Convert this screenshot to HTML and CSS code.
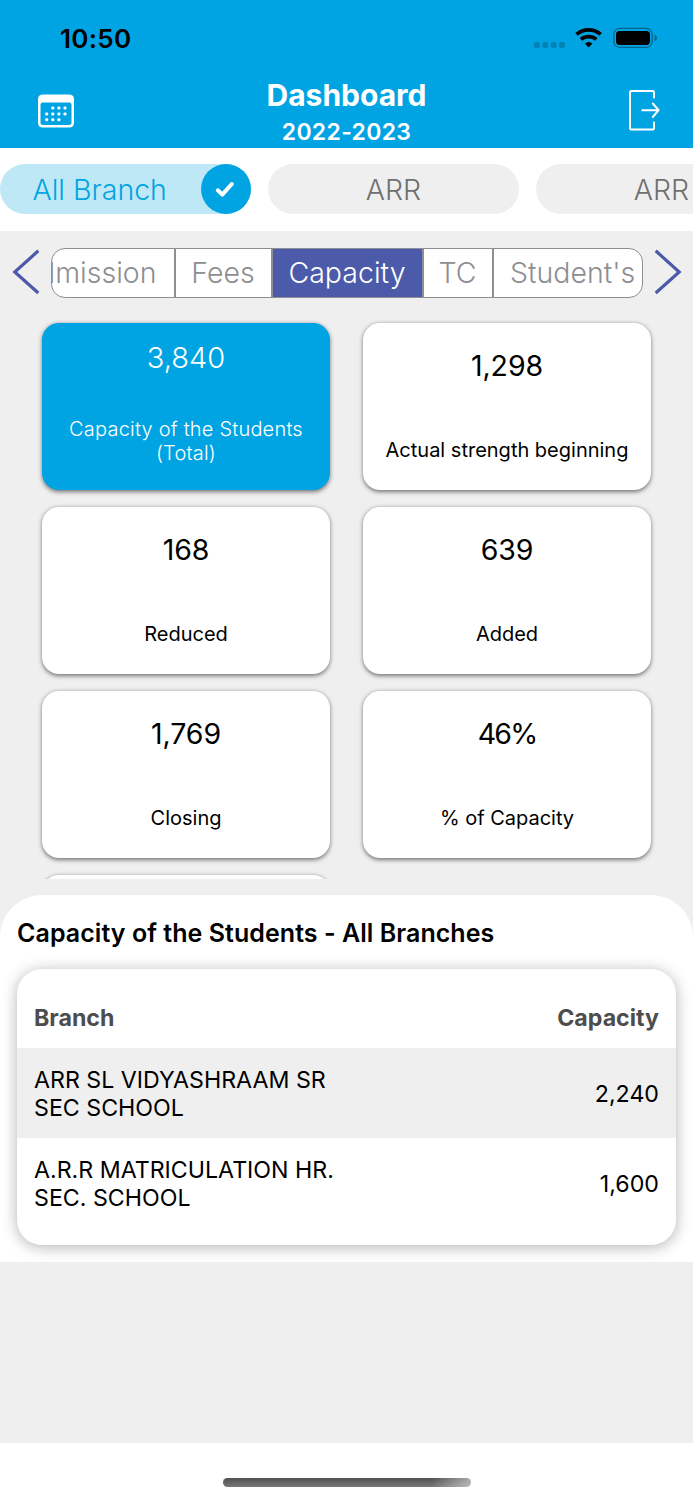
FILE: index.html
```html
<!DOCTYPE html>
<html lang="en">
<head>
  <meta charset="UTF-8" />
  <meta name="viewport" content="width=device-width, initial-scale=1.0"/>
  <title>Dashboard</title>
  <link rel="stylesheet" href="styles.css">
</head>
<body>
  <div class="app">
    <header class="header">
      <div class="status-bar">
        <span class="time">10:50</span>
        <svg class="status-icons" width="124" height="24" viewBox="0 0 124 24">
          <g fill="#0382b6">
            <rect x="1" y="16" width="6" height="6" rx="2"/>
            <rect x="9.3" y="16" width="6" height="6" rx="2"/>
            <rect x="17.7" y="16" width="6" height="6" rx="2"/>
            <rect x="26" y="16" width="6" height="6" rx="2"/>
          </g>
          <path d="M43.6 8.4 A18.3 18.3 0 0 1 67.6 8.4" fill="none" stroke="#000" stroke-width="3.9"/>
          <path d="M47.9 13.4 A12 12 0 0 1 63.3 13.4" fill="none" stroke="#000" stroke-width="3.8"/>
          <path d="M51.8 17.6 Q55.6 14.4 59.4 17.6 L55.6 21.6 Z" fill="#000"/>
          <rect x="80.8" y="2.4" width="38.4" height="19" rx="6" fill="none" stroke="#04658e" stroke-width="1.3"/>
          <rect x="83" y="4.9" width="34" height="14" rx="3.6" fill="#000"/>
          <path d="M121.5 8.6 Q124 10 124 11.9 Q124 14 121.5 15.2 Z" fill="#04658e"/>
        </svg>
      </div>
      <div class="nav-bar">
        <svg class="calendar-icon" width="36" height="34" viewBox="0 0 36 34">
          <path fill="#fff" fill-rule="evenodd" d="M5 0.5 H31 Q36 0.5 36 5.5 V28.5 Q36 33.5 31 33.5 H5 Q0 33.5 0 28.5 V5.5 Q0 0.5 5 0.5 Z M4.7 8.5 Q2.5 8.5 2.5 10.7 V28.5 Q2.5 31 5 31 H31 Q33.5 31 33.5 28.5 V10.7 Q33.5 8.5 31.3 8.5 Z"/>
          <g fill="#fff">
            <rect x="13.3" y="12.5" width="3" height="3" rx="1"/><rect x="19.4" y="12.5" width="3" height="3" rx="1"/><rect x="25.5" y="12.5" width="3" height="3" rx="1"/>
            <rect x="7.2" y="18.4" width="3" height="3" rx="1"/><rect x="13.3" y="18.4" width="3" height="3" rx="1"/><rect x="19.4" y="18.4" width="3" height="3" rx="1"/><rect x="25.5" y="18.4" width="3" height="3" rx="1"/>
            <rect x="7.2" y="24.3" width="3" height="3" rx="1"/><rect x="13.3" y="24.3" width="3" height="3" rx="1"/><rect x="19.4" y="24.3" width="3" height="3" rx="1"/>
          </g>
        </svg>
        <div class="heading">
          <h1>Dashboard</h1>
          <p>2022-2023</p>
        </div>
        <svg class="logout-icon" width="32" height="42" viewBox="0 0 32 42" fill="none" stroke="#fff" stroke-width="2" stroke-linecap="round" stroke-linejoin="round">
          <path d="M25 7.5 V2.5 Q25 1 23.5 1 H2.5 Q1 1 1 2.5 V38 Q1 39.5 2.5 39.5 H23.5 Q25 39.5 25 38 V32.5"/>
          <path d="M13.3 20.2 H29.3 M23.8 13.5 L29.6 20.2 L23.8 27"/>
        </svg>
      </div>
    </header>

    <div class="branches">
      <div class="branch selected">
        <span>All Branch</span>
        <div class="check">
          <svg width="50" height="50" viewBox="0 0 50 50"><path d="M16.8 26.3 L21.3 30.6 L30.8 20" fill="none" stroke="#fff" stroke-width="4" stroke-linecap="round" stroke-linejoin="round"/></svg>
        </div>
      </div>
      <div class="branch"><span>ARR</span></div>
      <div class="branch"><span>ARR</span></div>
    </div>

    <div class="tab-row">
      <svg width="28" height="46" viewBox="0 0 28 46"><path d="M26.3 1.8 L2.8 23 L26.3 44" fill="none" stroke="#4c5ba9" stroke-width="3.2"/></svg>
      <div class="tabs">
        <div class="tab tab-admission">Admission</div>
        <div class="tab tab-fees">Fees</div>
        <div class="tab tab-capacity active">Capacity</div>
        <div class="tab tab-tc">TC</div>
        <div class="tab tab-students">Student's</div>
      </div>
      <svg width="28" height="46" viewBox="0 0 28 46"><path d="M1.7 1.8 L25.2 23 L1.7 44" fill="none" stroke="#4c5ba9" stroke-width="3.2"/></svg>
    </div>

    <div class="cards">
      <div class="card active">
        <div class="value">3,840</div>
        <div class="label">Capacity of the Students (Total)</div>
      </div>
      <div class="card">
        <div class="value">1,298</div>
        <div class="label">Actual strength beginning</div>
      </div>
      <div class="card">
        <div class="value">168</div>
        <div class="label">Reduced</div>
      </div>
      <div class="card">
        <div class="value">639</div>
        <div class="label">Added</div>
      </div>
      <div class="card">
        <div class="value">1,769</div>
        <div class="label">Closing</div>
      </div>
      <div class="card">
        <div class="value percent">46%</div>
        <div class="label">% of Capacity</div>
      </div>
      <div class="card"></div>
    </div>

    <section class="panel">
      <h2>Capacity of the Students - All Branches</h2>
      <div class="table">
        <div class="row table-head">
          <span>Branch</span>
          <span>Capacity</span>
        </div>
        <div class="row shaded">
          <span class="name">ARR SL VIDYASHRAAM SR SEC SCHOOL</span>
          <span class="number">2,240</span>
        </div>
        <div class="row">
          <span class="name">A.R.R MATRICULATION HR. SEC. SCHOOL</span>
          <span class="number">1,600</span>
        </div>
      </div>
    </section>

    <footer class="bottom">
      <div class="home-indicator"></div>
    </footer>
  </div>
</body>
</html>
```
FILE: styles.css
```css
* {
  box-sizing: border-box;
}

body {
  margin: 0;
  font-family: Inter, sans-serif;
  background: #efefef;
  color: #000;
}

.app {
  width: 693px;
  height: 1500px;
  display: flex;
  flex-direction: column;
  overflow: hidden;
}

h1, h2, p {
  margin: 0;
}

.header {
  height: 147.6px;
  background: #00a4e3;
  flex-shrink: 0;
}

.status-bar {
  height: 76px;
  padding: 0 36px 0 60px;
  display: flex;
  align-items: center;
  justify-content: space-between;
}

.time {
  font-size: 26px;
  font-weight: 600;
  letter-spacing: 0.3px;
}

.nav-bar {
  height: 71px;
  padding: 0 32px 0 38px;
  display: grid;
  grid-template-columns: 36px 1fr 32px;
  align-items: flex-start;
}

.calendar-icon {
  margin-top: 18px;
}

.logout-icon {
  margin-top: 14px;
}

.heading {
  padding-right: 10px;
  text-align: center;
  color: #fff;
}

.heading h1 {
  font-size: 30px;
  font-weight: 700;
  line-height: 38px;
}

.heading p {
  font-size: 23px;
  font-weight: 600;
  line-height: 36px;
  letter-spacing: 0.3px;
}

.branches {
  height: 83.4px;
  padding-top: 16.7px;
  background: #fff;
  display: flex;
  gap: 17px;
  overflow: hidden;
  flex-shrink: 0;
}

.branch {
  width: 251px;
  height: 50px;
  border-radius: 25px;
  background: #efefef;
  color: #707070;
  font-size: 28.5px;
  font-weight: 350;
  display: flex;
  align-items: center;
  justify-content: center;
  flex-shrink: 0;
}

.branch.selected {
  background: #bfe8f7;
  color: #00a4e3;
  justify-content: space-between;
  padding-left: 32.5px;
}

.check {
  width: 50px;
  height: 50px;
  border-radius: 50%;
  background: #00a4e3;
}

.tab-row {
  padding: 17px 11.5px 0;
  height: 84px;
  display: flex;
  justify-content: space-between;
  flex-shrink: 0;
}

.tab-row > svg {
  margin-top: 1px;
}

.tabs {
  width: 592px;
  height: 50px;
  border: 1.5px solid #8e8e93;
  border-radius: 14px;
  background: #fff;
  display: flex;
  overflow: hidden;
}

.tab {
  height: 100%;
  border-right: 2px solid #8e8e93;
  color: #8e8e93;
  font-size: 28.5px;
  font-weight: 350;
  display: flex;
  align-items: center;
  justify-content: center;
  overflow: hidden;
  flex-shrink: 0;
}

.tab-admission {
  width: 124px;
  justify-content: flex-end;
  padding-right: 17px;
}

.tab-fees {
  width: 97px;
}

.tab-capacity {
  width: 151px;
}

.tab-tc {
  width: 70px;
}

.tab-students {
  width: 149px;
  border-right: none;
  justify-content: flex-start;
  padding-left: 16.5px;
}

.tab.active {
  background: #4c5ba9;
  color: #fff;
}

.cards {
  height: 564px;
  padding: 8px 42px 0;
  display: grid;
  grid-template-columns: 288px 288px;
  grid-auto-rows: 167.5px;
  gap: 16.5px 33px;
  overflow: hidden;
  flex-shrink: 0;
}

.card {
  border-radius: 17px;
  background: #fff;
  box-shadow: 0 1.5px 4px rgba(0, 0, 0, 0.5);
  padding: 0 20px 3.5px;
  display: flex;
  flex-direction: column;
  align-items: center;
  justify-content: center;
  gap: 54px;
  text-align: center;
}

.card.active {
  background: #00a4e3;
  color: #fff;
  gap: 41.5px;
  padding-bottom: 8px;
}

.value {
  font-size: 28.5px;
  line-height: 36px;
  letter-spacing: -0.1px;
}

.value.percent {
  letter-spacing: -1.8px;
}

.label {
  font-size: 20px;
  line-height: 24px;
}

.card.active .value {
  font-size: 29px;
  font-weight: 350;
  letter-spacing: 0;
}

.card.active .label {
  font-weight: 350;
  letter-spacing: 0.2px;
}

.panel {
  margin-top: 16.5px;
  height: 366.5px;
  padding: 21px 17px 0;
  border-radius: 42px 42px 0 0;
  background: #fff;
  overflow: hidden;
  flex-shrink: 0;
}

h2 {
  font-size: 25px;
  font-weight: 600;
  line-height: 34px;
  letter-spacing: 0.05px;
}

.table {
  margin-top: 18.5px;
  height: 276.5px;
  border-radius: 25px;
  background: #fff;
  box-shadow: 0 2px 15px rgba(0, 0, 0, 0.3);
  overflow: hidden;
}

.row {
  height: 90px;
  padding: 2px 17px 0;
  display: flex;
  align-items: center;
  justify-content: space-between;
  font-size: 23.2px;
  line-height: 28px;
}

.table-head {
  height: 79px;
  padding-top: 19px;
  color: #4d4d4d;
  font-weight: 700;
}

.shaded {
  background: #efefef;
}

.name {
  width: 312px;
}

.bottom {
  margin-top: auto;
  height: 57px;
  padding-top: 35px;
  background: #fff;
}

.home-indicator {
  width: 248px;
  height: 9px;
  margin: 0 auto;
  border-radius: 5px;
  background: linear-gradient(to right, transparent 84%, rgba(255, 255, 255, 0.5)), linear-gradient(#505050, #787878);
}
```
